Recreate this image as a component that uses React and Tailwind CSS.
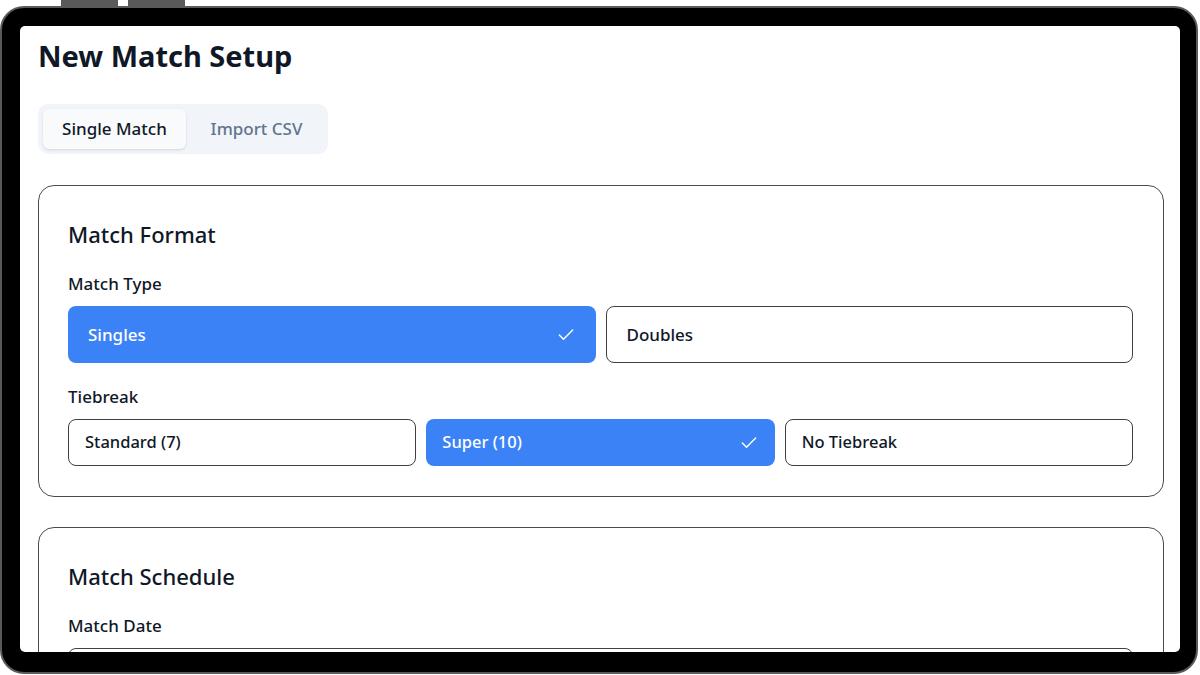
import { Check } from 'lucide-react';

const font = { fontFamily: '"Noto Sans", "Open Sans", sans-serif' };

function OptionButton({ label, selected, tall }) {
  const base = tall ? 'h-[57px] px-5 text-[17px]' : 'h-[47px] px-4 text-[16.5px]';
  return (
    <div
      className={`flex items-center justify-between rounded-lg font-medium ${base} ${
        selected ? 'bg-[#3b82f6] text-white' : 'bg-white text-gray-900 border border-[#3f3f46]'
      }`}
    >
      <span>{label}</span>
      {selected && <Check size={20} strokeWidth={1.75} className="text-white" />}
    </div>
  );
}

function Section({ title, children }) {
  return (
    <div className="rounded-[16px] border border-[#4b4b4b] pl-[29px] pr-[30px] pt-[34px] pb-[30px]">
      <h2 className="text-[22px] leading-[28px] font-medium text-gray-900">{title}</h2>
      {children}
    </div>
  );
}

function Label({ children, className = '' }) {
  return (
    <div className={`text-[17px] leading-[24px] font-medium text-gray-900 ${className}`}>{children}</div>
  );
}

export default function App() {
  return (
    <div className="relative w-[1200px] h-[675px] bg-white overflow-hidden pt-[6px]" style={font}>
      <div className="absolute top-0 left-[61px] w-[57px] h-[7px] bg-[#5a5a5a]" />
      <div className="absolute top-0 left-[128px] w-[57px] h-[7px] bg-[#5a5a5a]" />

      <div className="w-[1198px] h-[668px] rounded-[24px] border-2 border-[#5a5a5a] bg-black pt-[18px] pl-[18px] pr-[16px] pb-[20px]">
        <div className="w-full h-full bg-white rounded-[5px] overflow-hidden pl-[18px] pr-[16px] pt-[12px]">
          <h1 className="text-[29px] leading-[36px] font-bold text-gray-900">New Match Setup</h1>

          <div className="mt-[30px] flex w-[290px] h-[50px] p-[5px] rounded-[10px] bg-[#f1f5f9]">
            <div className="w-[143px] flex items-center justify-center rounded-md bg-[#f8fafc] shadow-sm text-[17px] font-medium text-gray-900">
              Single Match
            </div>
            <div className="flex-1 flex items-center justify-center text-[17px] font-medium text-slate-500 pl-[4px]">
              Import CSV
            </div>
          </div>

          <div className="mt-[31px] flex flex-col gap-[30px]">
            <Section title="Match Format">
              <Label className="mt-[24px]">Match Type</Label>
              <div className="mt-[10px] grid grid-cols-2 gap-[10px]">
                <OptionButton label="Singles" selected tall />
                <OptionButton label="Doubles" tall />
              </div>
              <Label className="mt-[22px]">Tiebreak</Label>
              <div className="mt-[10px] grid grid-cols-3 gap-[10px]">
                <OptionButton label="Standard (7)" />
                <OptionButton label="Super (10)" selected />
                <OptionButton label="No Tiebreak" />
              </div>
            </Section>

            <Section title="Match Schedule">
              <Label className="mt-[24px]">Match Date</Label>
              <div className="mt-[10px] h-[57px] rounded-lg border border-[#3f3f46]" />
            </Section>
          </div>
        </div>
      </div>
    </div>
  );
}
